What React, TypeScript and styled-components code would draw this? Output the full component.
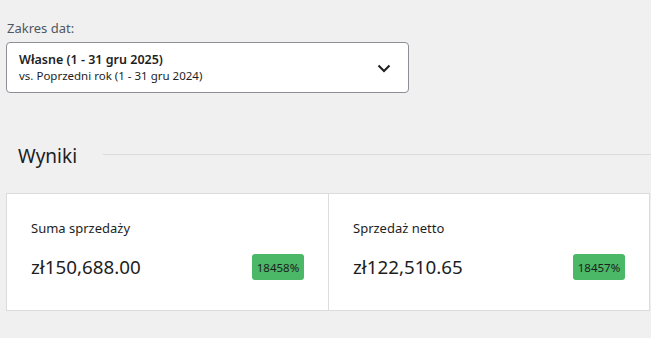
import React from "react";
import styled, { createGlobalStyle } from "styled-components";

const Global = createGlobalStyle`
  html, body { margin: 0; padding: 0; background: #f0f0f1; }
  body { font-family: "Segoe UI", "Noto Sans", sans-serif; color: #1e1e1e; overflow: hidden; }
`;

const Page = styled.div`
  width: 651px;
  height: 338px;
  padding: 19px 0 0 6px;
  box-sizing: border-box;
  display: flex;
  flex-direction: column;
`;

const Label = styled.label`
  font-size: 13px;
  color: #50575e;
  padding-left: 1px;
  line-height: 18px;
`;

const Select = styled.button`
  margin-top: 5px;
  width: 403px;
  height: 51px;
  box-sizing: border-box;
  background: #fff;
  border: 1px solid #8c8f94;
  border-radius: 4px;
  display: flex;
  align-items: center;
  justify-content: space-between;
  padding: 0 16px 0 12px;
  font-family: inherit;
  text-align: left;
  cursor: pointer;
`;

const SelectText = styled.div`
  display: flex;
  flex-direction: column;
`;

const Primary = styled.span`
  font-size: 12.5px;
  font-weight: 600;
  color: #1e1e1e;
  line-height: 16px;
`;

const Secondary = styled.span`
  font-size: 11.5px;
  color: #1e1e1e;
  line-height: 15px;
`;

const SectionHeader = styled.div`
  margin-top: 50px;
  display: flex;
  align-items: center;
  gap: 26px;
  padding-left: 12px;
`;

const Title = styled.h2`
  margin: 0;
  font-size: 19px;
  font-weight: 400;
  color: #1e1e1e;
  line-height: 26px;
`;

const Rule = styled.div`
  flex: 1;
  height: 1px;
  background: #dcdcde;
  margin-top: -4px;
`;

const Cards = styled.div`
  margin-top: 24px;
  width: 644px;
  height: 118px;
  box-sizing: border-box;
  display: grid;
  grid-template-columns: 1fr 1fr;
  background: #fff;
  border: 1px solid #dcdcde;
`;

const Card = styled.div<{ $divider?: boolean }>`
  padding: 25px 24px 0 24px;
  border-left: ${(p) => (p.$divider ? "1px solid #dcdcde" : "none")};
  display: flex;
  flex-direction: column;
`;

const CardLabel = styled.div`
  font-size: 13px;
  color: #1e1e1e;
  line-height: 18px;
`;

const CardRow = styled.div`
  margin-top: 16px;
  display: flex;
  align-items: center;
  justify-content: space-between;
`;

const Value = styled.div`
  font-size: 18.8px;
  color: #1e1e1e;
  line-height: 28px;
`;

const Badge = styled.span`
  background: #4ab866;
  color: #1e1e1e;
  border-radius: 3px;
  font-size: 11.5px;
  height: 26px;
  width: 52px;
  display: flex;
  align-items: center;
  justify-content: center;
  box-sizing: border-box;
`;

const Chevron = () => (
  <svg width="16" height="16" viewBox="0 0 16 16" fill="none">
    <path d="M2.5 5.5 L8 11 L13.5 5.5" stroke="#1e1e1e" strokeWidth="2" />
  </svg>
);

export default function App() {
  return (
    <>
      <Global />
      <Page>
        <Label>Zakres dat:</Label>
        <Select>
          <SelectText>
            <Primary>Własne (1 - 31 gru 2025)</Primary>
            <Secondary>vs. Poprzedni rok (1 - 31 gru 2024)</Secondary>
          </SelectText>
          <Chevron />
        </Select>
        <SectionHeader>
          <Title>Wyniki</Title>
          <Rule />
        </SectionHeader>
        <Cards>
          <Card>
            <CardLabel>Suma sprzedaży</CardLabel>
            <CardRow>
              <Value>zł150,688.00</Value>
              <Badge>18458%</Badge>
            </CardRow>
          </Card>
          <Card $divider>
            <CardLabel>Sprzedaż netto</CardLabel>
            <CardRow>
              <Value>zł122,510.65</Value>
              <Badge>18457%</Badge>
            </CardRow>
          </Card>
        </Cards>
      </Page>
    </>
  );
}
